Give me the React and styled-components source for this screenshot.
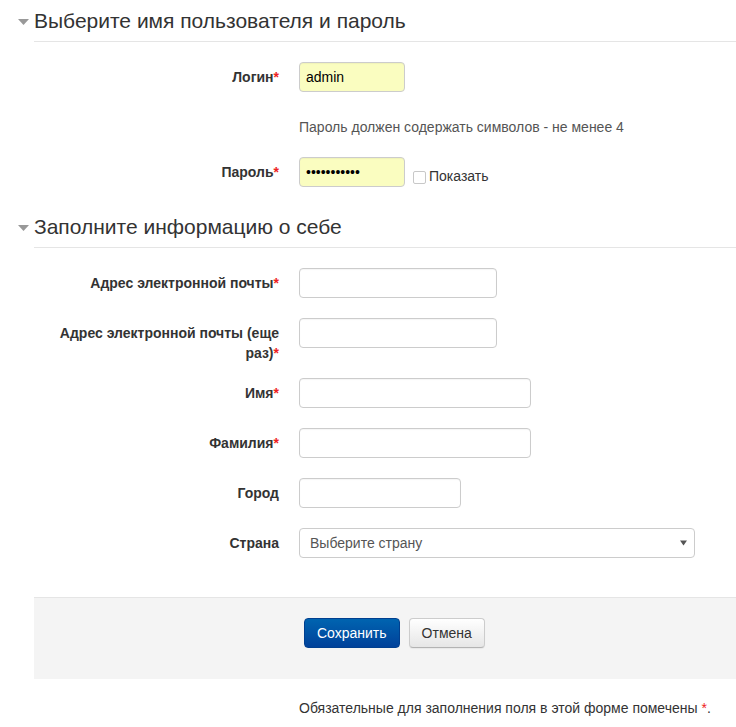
import React from "react";
import styled, { createGlobalStyle } from "styled-components";

const Global = createGlobalStyle`
  html, body { margin: 0; padding: 0; background: #fff; }
  body { font-family: "Liberation Sans", Arial, sans-serif; font-size: 14px; color: #333; }
  * { box-sizing: border-box; }
`;

const Page = styled.div`
  width: 736px;
  padding-top: 1px;
`;

const Fieldset = styled.section`
  display: flow-root;
  padding-bottom: ${(p) => p.$pb || 0}px;
`;

const Legend = styled.div`
  display: flex;
  align-items: center;
  padding-left: 18px;
  margin-bottom: 20px;
`;

const Toggle = styled.span`
  width: 16px;
  height: 40px;
  display: flex;
  align-items: center;
  svg { display: block; margin-top: 1px; }
`;

const LegendTitle = styled.h2`
  flex: 1;
  margin: 0;
  font-weight: normal;
  font-size: 21px;
  line-height: 40px;
  color: #333;
  border-bottom: 1px solid #e5e5e5;
`;

const Row = styled.div`
  display: grid;
  grid-template-columns: 245px 1fr;
  column-gap: 20px;
  padding-left: 34px;
  min-height: ${(p) => p.$h || 35}px;
  margin-bottom: 15px;
  align-items: start;
`;

const Label = styled.label`
  text-align: right;
  font-weight: bold;
  padding-top: 5px;
  line-height: 20px;
  color: #333;
`;

const Req = styled.span`
  color: #e22;
`;

const Controls = styled.div`
  display: flex;
  align-items: flex-start;
`;

const Input = styled.input`
  width: ${(p) => p.$w}px;
  height: 30px;
  padding: 4px 6px;
  border: 1px solid #ccc;
  border-radius: 4px;
  font-family: "Liberation Sans", Arial, sans-serif;
  font-size: 14px;
  color: #000;
  background: ${(p) => (p.$filled ? "#fafdc0" : "#fff")};
  box-shadow: inset 0 1px 1px rgba(0,0,0,0.04);
  outline: none;
`;

const Help = styled.div`
  padding-top: 5px;
  line-height: 20px;
  color: #555;
`;

const CheckLabel = styled.label`
  display: flex;
  align-items: center;
  margin-left: 8px;
  padding-top: 9px;
  line-height: 20px;
  color: #333;
`;

const Box = styled.span`
  width: 13px;
  height: 13px;
  border: 1px solid #c8c8c8;
  border-radius: 2px;
  background: #fff;
  margin-right: 3px;
  margin-top: 2px;
`;

const Select = styled.div`
  width: 396px;
  height: 30px;
  border: 1px solid #ccc;
  border-radius: 4px;
  display: flex;
  align-items: center;
  justify-content: space-between;
  padding: 0 7px 0 10px;
  color: #555;
  background: #fff;
`;

const Actions = styled.div`
  margin-left: 34px;
  border-top: 1px solid #e5e5e5;
  background: #f4f4f4;
  padding: 20px 0 31px 270px;
  display: flex;
  gap: 9px;
`;

const Button = styled.button`
  height: 30px;
  padding: 0 12px;
  border-radius: 4px;
  font-family: "Liberation Sans", Arial, sans-serif;
  font-size: 14px;
  cursor: pointer;
  ${(p) =>
    p.$primary
      ? `
    color: #fff;
    border: 1px solid #003f8f;
    background: linear-gradient(to bottom, #0064b0, #00419a);
  `
      : `
    color: #333;
    border: 1px solid #ccc;
    border-bottom-color: #b3b3b3;
    background: linear-gradient(to bottom, #ffffff, #e6e6e6);
    box-shadow: 0 1px 1px rgba(0,0,0,0.05);
  `}
`;

const Note = styled.p`
  margin: 19px 0 0 299px;
  line-height: 20px;
  color: #333;
`;

const Caret = () => (
  <svg width="11" height="6" viewBox="0 0 11 6">
    <path d="M0 0 H11 L5.5 6 Z" fill="#999" />
  </svg>
);

const SelectArrow = () => (
  <svg width="7" height="6" viewBox="0 0 7 6">
    <path d="M0 0.5 H7 L3.5 5.5 Z" fill="#555" />
  </svg>
);

const Section = ({ title, children, pb }) => (
  <Fieldset $pb={pb}>
    <Legend>
      <Toggle>
        <Caret />
      </Toggle>
      <LegendTitle>{title}</LegendTitle>
    </Legend>
    {children}
  </Fieldset>
);

const Field = ({ label, req, children, h }) => (
  <Row $h={h}>
    <Label>
      {label}
      {req && <Req>*</Req>}
    </Label>
    <Controls>{children}</Controls>
  </Row>
);

export default function App() {
  return (
    <Page>
      <Global />
      <Section title="Выберите имя пользователя и пароль">
        <Field label="Логин" req>
          <Input $w={106} $filled defaultValue="admin" />
        </Field>
        <Row $h={30}>
          <span />
          <Help>Пароль должен содержать символов - не менее 4</Help>
        </Row>
        <Field label="Пароль" req>
          <Input $w={106} $filled type="password" defaultValue="adminadmin1" />
          <CheckLabel>
            <Box />
            Показать
          </CheckLabel>
        </Field>
      </Section>
      <Section title="Заполните информацию о себе" pb={19}>
        <Field label="Адрес электронной почты" req>
          <Input $w={198} />
        </Field>
        <Field label="Адрес электронной почты (еще раз)" req h={45}>
          <Input $w={198} />
        </Field>
        <Field label="Имя" req>
          <Input $w={232} />
        </Field>
        <Field label="Фамилия" req>
          <Input $w={232} />
        </Field>
        <Field label="Город">
          <Input $w={162} />
        </Field>
        <Field label="Страна">
          <Select>
            <span>Выберите страну</span>
            <SelectArrow />
          </Select>
        </Field>
      </Section>
      <Actions>
        <Button $primary>Сохранить</Button>
        <Button>Отмена</Button>
      </Actions>
      <Note>
        Обязательные для заполнения поля в этой форме помечены <Req>*</Req>.
      </Note>
    </Page>
  );
}
